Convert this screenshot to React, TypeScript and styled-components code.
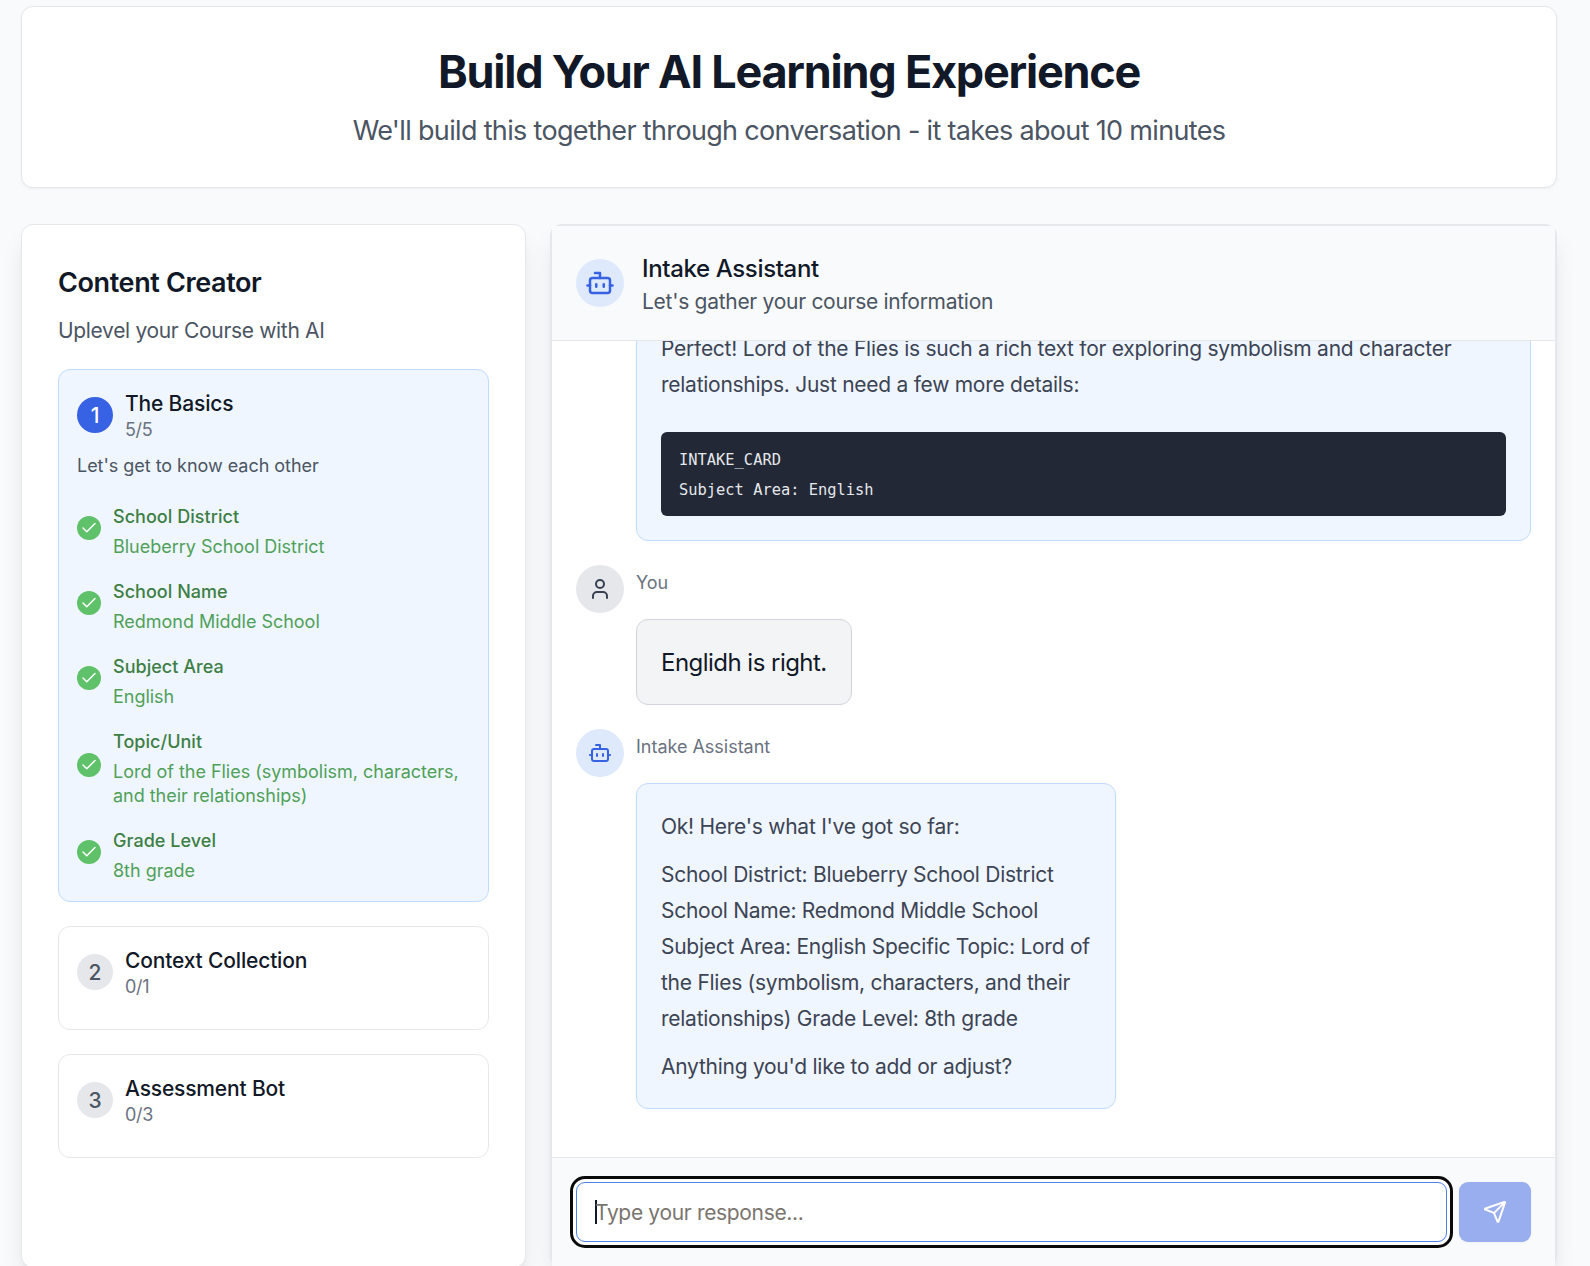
import React from "react";
import styled, { createGlobalStyle } from "styled-components";
import { Bot, Check, Send, User } from "lucide-react";

const GlobalStyle = createGlobalStyle`
  *, *::before, *::after { box-sizing: border-box; }
  body {
    margin: 0;
    background: #f9fafb;
    color: #111827;
    font-family: Inter, "Liberation Sans", sans-serif;
    -webkit-font-smoothing: antialiased;
  }
  h1, h2, h3, p, pre { margin: 0; }
`;

const Page = styled.div`
  height: 1266px;
  overflow: hidden;
  padding: 6px 33px 0 21px;
  display: flex;
  flex-direction: column;
  gap: 36px;
`;

const Hero = styled.header`
  flex: none;
  background: #fff;
  border: 1px solid #e5e7eb;
  border-radius: 12px;
  box-shadow: 0 1px 3px rgba(0, 0, 0, 0.05);
  padding: 38px 36px 35px;
  text-align: center;
`;

const HeroTitle = styled.h1`
  font-size: 45px;
  line-height: 54px;
  font-weight: 700;
  letter-spacing: -0.0275em;
  margin-bottom: 11px;
`;

const HeroText = styled.p`
  font-size: 27px;
  line-height: 42px;
  letter-spacing: -0.0247em;
  color: #4b5563;
`;

const Columns = styled.div`
  flex: none;
  display: grid;
  grid-template-columns: 505px 1007px;
  grid-template-rows: 1044px;
  gap: 24px;
`;

const Sidebar = styled.aside`
  background: #fff;
  border: 1px solid #e5e7eb;
  border-radius: 12px;
  box-shadow: 0 15px 23px -4px rgba(0, 0, 0, 0.1), 0 6px 9px -6px rgba(0, 0, 0, 0.1);
  padding: 37px 36px 36px;
`;

const SidebarTitle = styled.h2`
  font-size: 27px;
  line-height: 42px;
  font-weight: 600;
  letter-spacing: -0.014em;
  margin-bottom: 12px;
`;

const SidebarText = styled.p`
  font-size: 21px;
  line-height: 30px;
  letter-spacing: -0.0155em;
  color: #4b5563;
  margin-bottom: 23px;
`;

const StepList = styled.div`
  display: flex;
  flex-direction: column;
  gap: 24px;
`;

const StepCard = styled.section<{ $active?: boolean }>`
  border: 1px solid ${(p) => (p.$active ? "#bfdbfe" : "#e5e7eb")};
  background: ${(p) => (p.$active ? "#eff6ff" : "#fff")};
  border-radius: 12px;
  padding: 18px;
`;

const StepHead = styled.div`
  display: flex;
  align-items: center;
  gap: 12px;
  margin-bottom: 12px;
`;

const StepNumber = styled.span<{ $active?: boolean }>`
  width: 36px;
  height: 36px;
  padding-top: 1px;
  flex: none;
  border-radius: 50%;
  display: flex;
  align-items: center;
  justify-content: center;
  font-size: 21px;
  font-weight: 500;
  background: ${(p) => (p.$active ? "#3762e3" : "#e5e7eb")};
  color: ${(p) => (p.$active ? "#fff" : "#4b5563")};
`;

const StepTitle = styled.h3`
  padding-top: 2px;
  font-size: 21px;
  line-height: 28px;
  font-weight: 500;
  letter-spacing: -0.008em;
`;

const StepCount = styled.p`
  font-size: 18px;
  line-height: 24px;
  letter-spacing: -0.018em;
  color: #6b7280;
`;

const StepText = styled.p`
  font-size: 18px;
  line-height: 24px;
  letter-spacing: -0.002em;
  color: #4b5563;
  margin-bottom: 18px;
`;

const FieldList = styled.div`
  display: flex;
  flex-direction: column;
  gap: 12px;
`;

const Field = styled.div`
  display: flex;
  align-items: center;
  gap: 12px;
`;

const FieldBadge = styled.span`
  width: 24px;
  height: 24px;
  margin-top: 1px;
  flex: none;
  border-radius: 50%;
  background: #5fc169;
  color: #fff;
  display: flex;
  align-items: center;
  justify-content: center;
`;

const FieldBody = styled.div`
  padding-top: 9px;
  display: flex;
  flex-direction: column;
  gap: 6px;
  font-size: 18px;
  line-height: 24px;
`;

const FieldName = styled.p`
  font-weight: 500;
  letter-spacing: 0.002em;
  color: #3d7f45;
`;

const FieldValue = styled.p`
  letter-spacing: -0.001em;
  color: #4fa159;
`;

const Chat = styled.main`
  display: flex;
  flex-direction: column;
  background: #fff;
  border: 2px solid #e5e7eb;
  border-radius: 12px;
  box-shadow: 0 15px 23px -4px rgba(0, 0, 0, 0.1), 0 6px 9px -6px rgba(0, 0, 0, 0.1);
`;

const ChatHeader = styled.div`
  flex: none;
  display: flex;
  align-items: center;
  gap: 18px;
  padding: 24px;
  background: #f9fafb;
  border-bottom: 1px solid #e5e7eb;
`;

const Avatar = styled.span<{ $user?: boolean }>`
  width: 48px;
  height: 48px;
  flex: none;
  border-radius: 50%;
  display: flex;
  align-items: center;
  justify-content: center;
  background: ${(p) => (p.$user ? "#e5e7eb" : "#dee9fc")};
  color: ${(p) => (p.$user ? "#374151" : "#3762e3")};
`;

const ChatTitle = styled.h2`
  padding-top: 2px;
  font-size: 24px;
  line-height: 34px;
  font-weight: 500;
  letter-spacing: -0.015em;
`;

const ChatSubtitle = styled.p`
  padding-top: 2px;
  font-size: 21px;
  line-height: 28px;
  letter-spacing: -0.0135em;
  color: #4b5563;
`;

const Thread = styled.div`
  flex: 1;
  min-height: 0;
  overflow: hidden;
  display: flex;
  flex-direction: column;
  justify-content: flex-end;
  gap: 24px;
  padding: 24px 24px 48px;
`;

const Message = styled.article<{ $continued?: boolean }>`
  flex: none;
  display: flex;
  align-items: flex-start;
  gap: 12px;
  padding-left: ${(p) => (p.$continued ? 60 : 0)}px;
`;

const MessageBody = styled.div<{ $wide?: boolean }>`
  display: flex;
  flex-direction: column;
  align-items: flex-start;
  gap: 18px;
  ${(p) => (p.$wide ? "flex: 1;" : "width: 480px;")}
`;

const Sender = styled.p`
  font-size: 18px;
  line-height: 36px;
  letter-spacing: -0.001em;
  color: #6b7280;
`;

const Bubble = styled.div<{ $user?: boolean }>`
  display: flex;
  flex-direction: column;
  gap: 12px;
  ${(p) => (p.$user ? "" : "align-self: stretch;")}
  padding: 25px 24px 23px;
  border: 1px solid ${(p) => (p.$user ? "#d1d5db" : "#bfdbfe")};
  border-radius: 12px;
  background: ${(p) => (p.$user ? "#f3f4f6" : "#eff6ff")};
  color: ${(p) => (p.$user ? "#111827" : "#3d4454")};
  font-size: ${(p) => (p.$user ? 24 : 21)}px;
  line-height: 36px;
  letter-spacing: ${(p) => (p.$user ? "-0.022em" : "-0.0125em")};
`;

const Code = styled.pre`
  margin: 17px 0 1px;
  padding: 13px 18px 11px;
  border-radius: 6px;
  background: #222835;
  color: #e5e7eb;
  font-family: "DejaVu Sans Mono", "Liberation Mono", monospace;
  font-size: 15.4px;
  line-height: 30px;
  letter-spacing: 0;
`;

const Composer = styled.div`
  flex: none;
  display: flex;
  gap: 12px;
  padding: 24px;
  background: #f9fafb;
  border-top: 1px solid #e5e7eb;
`;

const Input = styled.div`
  flex: 1;
  height: 60px;
  display: flex;
  align-items: center;
  padding: 0 18px;
  background: #fff;
  border: 1px solid #4a83ee;
  border-radius: 9px;
  box-shadow: 0 0 0 3px #fff;
  outline: 3px solid #0a0a0a;
  outline-offset: 3px;
`;

const Caret = styled.span`
  width: 2px;
  height: 24px;
  margin-right: -2px;
  background: #111827;
`;

const Placeholder = styled.span`
  padding-top: 1px;
  font-size: 21px;
  letter-spacing: -0.016em;
  color: #7a756f;
`;

const SendButton = styled.button`
  width: 72px;
  height: 60px;
  padding: 0;
  border: 0;
  border-radius: 9px;
  background: #98aeef;
  color: #fff;
  display: flex;
  align-items: center;
  justify-content: center;
  box-shadow: 0 1px 3px rgba(0, 0, 0, 0.04);
`;

const fields = [
  { name: "School District", value: "Blueberry School District" },
  { name: "School Name", value: "Redmond Middle School" },
  { name: "Subject Area", value: "English" },
  { name: "Topic/Unit", value: "Lord of the Flies (symbolism, characters, and their relationships)" },
  { name: "Grade Level", value: "8th grade" },
];

interface StepProps {
  number: number;
  title: string;
  count: string;
  active?: boolean;
  children?: React.ReactNode;
}

function Step({ number, title, count, active, children }: StepProps) {
  return (
    <StepCard $active={active}>
      <StepHead>
        <StepNumber $active={active}>{number}</StepNumber>
        <div>
          <StepTitle>{title}</StepTitle>
          <StepCount>{count}</StepCount>
        </div>
      </StepHead>
      {children}
    </StepCard>
  );
}

export default function App() {
  return (
    <>
      <GlobalStyle />
      <Page>
        <Hero>
          <HeroTitle>Build Your AI Learning Experience</HeroTitle>
          <HeroText>We'll build this together through conversation - it takes about 10 minutes</HeroText>
        </Hero>
        <Columns>
          <Sidebar>
            <SidebarTitle>Content Creator</SidebarTitle>
            <SidebarText>Uplevel your Course with AI</SidebarText>
            <StepList>
              <Step number={1} title="The Basics" count="5/5" active>
                <StepText>Let's get to know each other</StepText>
                <FieldList>
                  {fields.map((f) => (
                    <Field key={f.name}>
                      <FieldBadge>
                        <Check size={18} strokeWidth={2} />
                      </FieldBadge>
                      <FieldBody>
                        <FieldName>{f.name}</FieldName>
                        <FieldValue>{f.value}</FieldValue>
                      </FieldBody>
                    </Field>
                  ))}
                </FieldList>
              </Step>
              <Step number={2} title="Context Collection" count="0/1" />
              <Step number={3} title="Assessment Bot" count="0/3" />
            </StepList>
          </Sidebar>
          <Chat>
            <ChatHeader>
              <Avatar>
                <Bot size={30} />
              </Avatar>
              <div>
                <ChatTitle>Intake Assistant</ChatTitle>
                <ChatSubtitle>Let's gather your course information</ChatSubtitle>
              </div>
            </ChatHeader>
            <Thread>
              <Message $continued>
                <MessageBody $wide>
                  <Bubble>
                    <p>
                      Perfect! Lord of the Flies is such a rich text for exploring symbolism and character
                      relationships. Just need a few more details:
                    </p>
                    <Code>{"INTAKE_CARD\nSubject Area: English"}</Code>
                  </Bubble>
                </MessageBody>
              </Message>
              <Message>
                <Avatar $user>
                  <User size={24} />
                </Avatar>
                <MessageBody>
                  <Sender>You</Sender>
                  <Bubble $user>
                    <p>Englidh is right.</p>
                  </Bubble>
                </MessageBody>
              </Message>
              <Message>
                <Avatar>
                  <Bot size={24} />
                </Avatar>
                <MessageBody>
                  <Sender>Intake Assistant</Sender>
                  <Bubble>
                    <p>Ok! Here's what I've got so far:</p>
                    <p>
                      School District: Blueberry School District School Name: Redmond Middle School Subject Area:
                      English Specific Topic: Lord of the Flies (symbolism, characters, and their relationships)
                      Grade Level: 8th grade
                    </p>
                    <p>Anything you'd like to add or adjust?</p>
                  </Bubble>
                </MessageBody>
              </Message>
            </Thread>
            <Composer>
              <Input>
                <Caret />
                <Placeholder>Type your response...</Placeholder>
              </Input>
              <SendButton aria-label="Send">
                <Send size={24} />
              </SendButton>
            </Composer>
          </Chat>
        </Columns>
      </Page>
    </>
  );
}
